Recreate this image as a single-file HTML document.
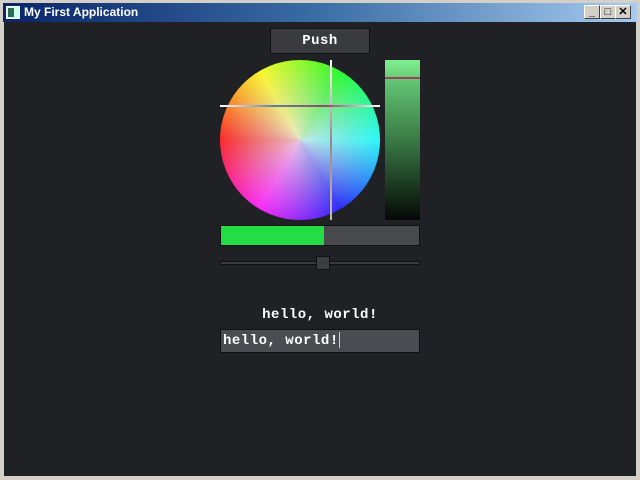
<!DOCTYPE html>
<html><head><style>
*{margin:0;padding:0;box-sizing:border-box}
body{width:640px;height:480px;background:#d4d0c8;position:relative;overflow:hidden;font-family:"Liberation Sans",sans-serif}
.tb{position:absolute;left:3px;top:3px;width:634px;height:19px;background:linear-gradient(90deg,#0a246a 0%,#3a6ea5 50%,#a6caf0 100%)}
.tt{position:absolute;left:24px;top:5px;color:#fff;font:bold 12px "Liberation Sans",sans-serif}
.ic{position:absolute;left:6px;top:6px;width:14px;height:13px;background:#cfe;border:1px solid #fff}
.ic:before{content:"";position:absolute;left:1px;top:1px;width:6px;height:9px;background:#2a6a5a}
.bt{position:absolute;top:5px;width:16px;height:14px;background:#d4d0c8;border:1px solid;border-color:#fff #404040 #404040 #fff;font:bold 11px "Liberation Sans",sans-serif;text-align:center;line-height:12px;color:#000}
.cont{position:absolute;left:4px;top:22px;width:632px;height:454px;background:#1f2124}
.mono{font-family:"Liberation Mono","DejaVu Sans Mono",monospace;font-weight:bold;color:#fff;letter-spacing:0.5px}
</style></head><body>
<div class="tb"></div>
<div class="ic"></div>
<div class="tt">My First Application</div>
<div class="bt" style="left:584px">_</div>
<div class="bt" style="left:600px">□</div>
<div class="bt" style="left:615px">✕</div>
<div class="cont"></div>
<div class="mono" style="position:absolute;left:270px;top:28px;width:100px;height:26px;background:#3a3b3f;border:1px solid #111;font-size:14px;text-align:center;line-height:24px">Push</div>
<div style="position:absolute;left:220px;top:60px;width:160px;height:160px;border-radius:50%;background:conic-gradient(hsl(90,100%,50%) 0deg,hsl(120,100%,50%) 30deg,hsl(150,100%,50%) 60deg,hsl(180,100%,50%) 90deg,hsl(210,100%,50%) 120deg,hsl(240,100%,50%) 150deg,hsl(270,100%,50%) 180deg,hsl(300,100%,50%) 210deg,hsl(330,100%,50%) 240deg,hsl(0,100%,50%) 270deg,hsl(30,100%,50%) 300deg,hsl(60,100%,50%) 330deg,hsl(90,100%,50%) 360deg)"></div>
<div style="position:absolute;left:220px;top:60px;width:160px;height:160px;border-radius:50%;background:radial-gradient(circle,rgba(230,230,230,.85) 0%,rgba(220,220,220,.55) 35%,rgba(220,220,220,.2) 70%,rgba(255,255,255,0) 100%)"></div>
<div style="position:absolute;left:330px;top:60px;width:2px;height:160px;background:linear-gradient(#fff,#a08090,#c0c0a0)"></div>
<div style="position:absolute;left:220px;top:105px;width:160px;height:2px;background:linear-gradient(90deg,#fff,#6080a0,#a04070,#fff)"></div>
<div style="position:absolute;left:385px;top:60px;width:35px;height:160px;background:linear-gradient(#80f090 0%,#60c070 15%,#3a7a45 50%,#142a18 85%,#050805 100%)"></div>
<div style="position:absolute;left:385px;top:77px;width:35px;height:2px;background:#a04060"></div>
<div style="position:absolute;left:220px;top:225px;width:200px;height:21px;background:#48494d;border:1px solid #111"><div style="width:103px;height:100%;background:#22dd44"></div></div>
<div style="position:absolute;left:220px;top:261px;width:200px;height:4px;background:#3a3b3f;border:1px solid #111"></div>
<div style="position:absolute;left:316px;top:256px;width:14px;height:14px;background:#3c3d41;border:1px solid #111"></div>
<div class="mono" style="position:absolute;left:220px;top:307px;width:200px;text-align:center;font-size:14px">hello, world!</div>
<div class="mono" style="position:absolute;left:220px;top:329px;width:200px;height:24px;background:#4b4c52;border:1px solid #111;font-size:14px;line-height:22px;padding-left:2px">hello, world!<span style="display:inline-block;width:1px;height:16px;background:#ccc;vertical-align:middle;font-weight:normal"></span></div>
</body></html>
